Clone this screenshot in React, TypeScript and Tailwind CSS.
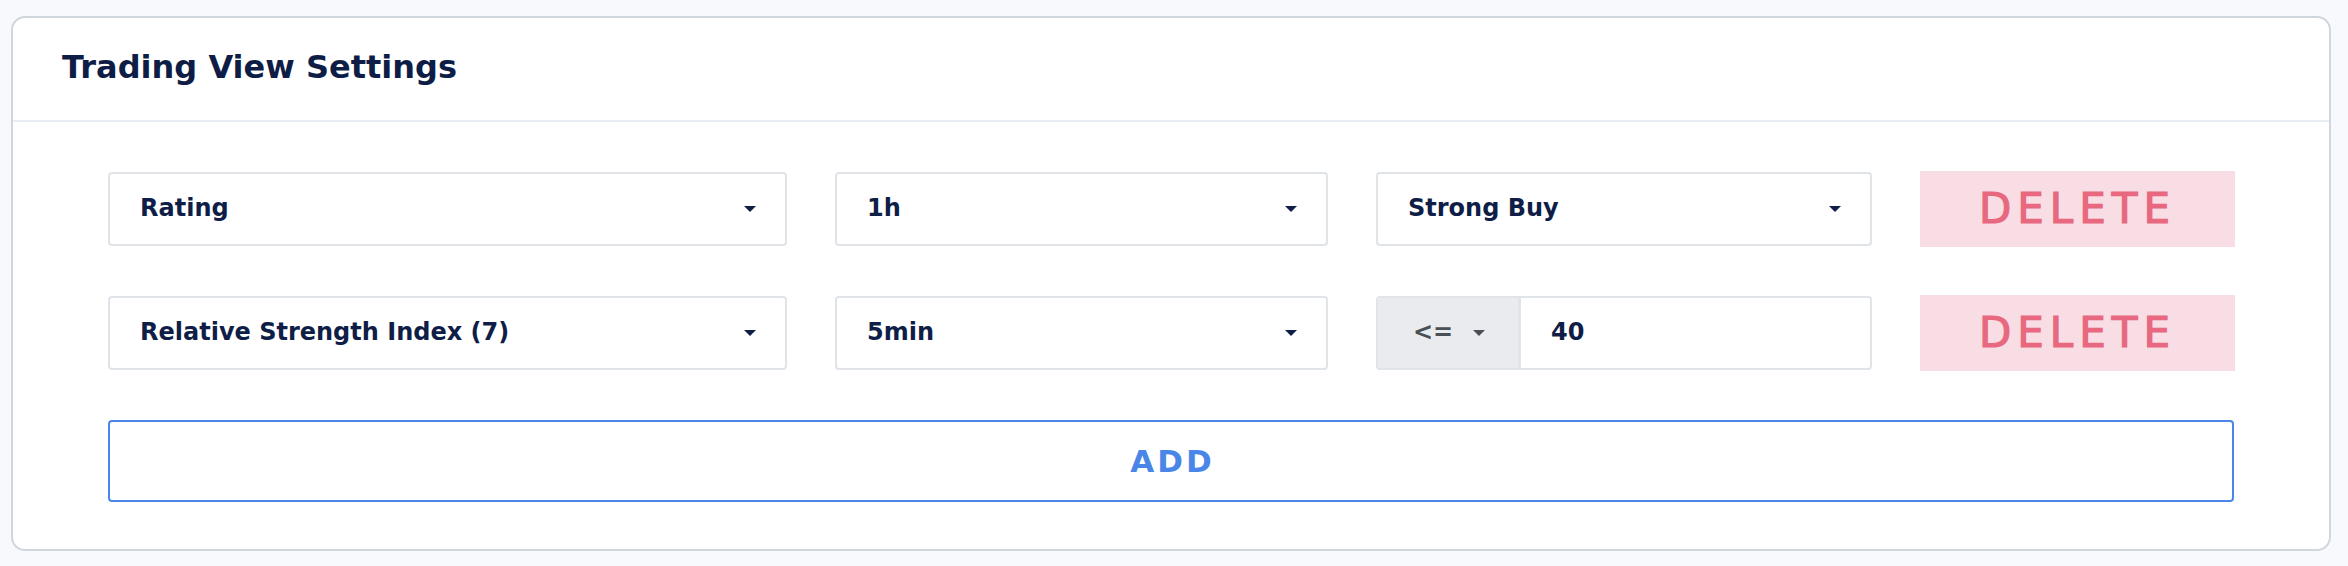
import React from "react";

const Caret = ({ color = "#0f1e47" }: { color?: string }) => (
  <svg width="12" height="6" viewBox="0 0 12 6" className="shrink-0">
    <path d="M0 0 L12 0 L6 6 Z" fill={color} />
  </svg>
);

const Select = ({ label }: { label: string }) => (
  <div className="flex h-[74px] items-center justify-between rounded-[4px] border-2 border-[#e0e4e9] bg-white pl-[30px] pr-[29px] text-[24px] font-bold text-[#0f1e47]">
    <span className="pb-[2px]">{label}</span>
    <Caret />
  </div>
);

const DeleteButton = () => (
  <button className="flex h-[76px] items-center justify-center bg-[#f9dde4] text-[42px] tracking-[6px] text-[#e8687f] [-webkit-text-stroke:1.2px_#e8687f]">
    <span className="pb-[2px]">DELETE</span>
  </button>
);

export default function App() {
  return (
    <div
      className="min-h-[566px] bg-[#f8f9fd] pl-[11px] pr-[17px] pt-[16px] pb-[13px]"
      style={{ fontFamily: '"DejaVu Sans", "Liberation Sans", sans-serif' }}
    >
      <div className="rounded-[14px] border-2 border-[#cfd6de] bg-white">
        <div className="flex h-[104px] items-center border-b-2 border-[#e8ecf3] pl-[49px]">
          <h1 className="pb-[4px] text-[32px] font-bold text-[#0d1d45]">Trading View Settings</h1>
        </div>
        <div className="flex flex-col gap-[48px] px-[95px] pt-[49px] pb-[47px]">
          <div className="grid grid-cols-[679px_493px_496px_315px] items-center gap-[48px]">
            <Select label="Rating" />
            <Select label="1h" />
            <Select label="Strong Buy" />
            <DeleteButton />
          </div>
          <div className="grid grid-cols-[679px_493px_496px_315px] items-center gap-[48px]">
            <Select label="Relative Strength Index (7)" />
            <Select label="5min" />
            <div className="flex h-[74px] overflow-hidden rounded-[4px] border-2 border-[#e0e4e9] bg-white">
              <div className="flex w-[143px] items-center justify-center gap-[20px] border-r-[3px] border-[#e0e4e9] bg-[#e9ebef] pl-[2px] text-[24px] font-bold text-[#4a4f57]">
                <span className="pb-[2px]">&lt;=</span>
                <Caret color="#4a4f57" />
              </div>
              <div className="flex flex-1 items-center pl-[30px] text-[24px] font-bold text-[#0f1e47]">
                <span className="pb-[2px]">40</span>
              </div>
            </div>
            <DeleteButton />
          </div>
          <button className="mt-[1px] flex h-[82px] items-center justify-center rounded-[4px] border-2 border-[#4a86e8] pl-[3px] text-[31px] font-bold tracking-[3px] text-[#4a86e8]">
            ADD
          </button>
        </div>
      </div>
    </div>
  );
}
